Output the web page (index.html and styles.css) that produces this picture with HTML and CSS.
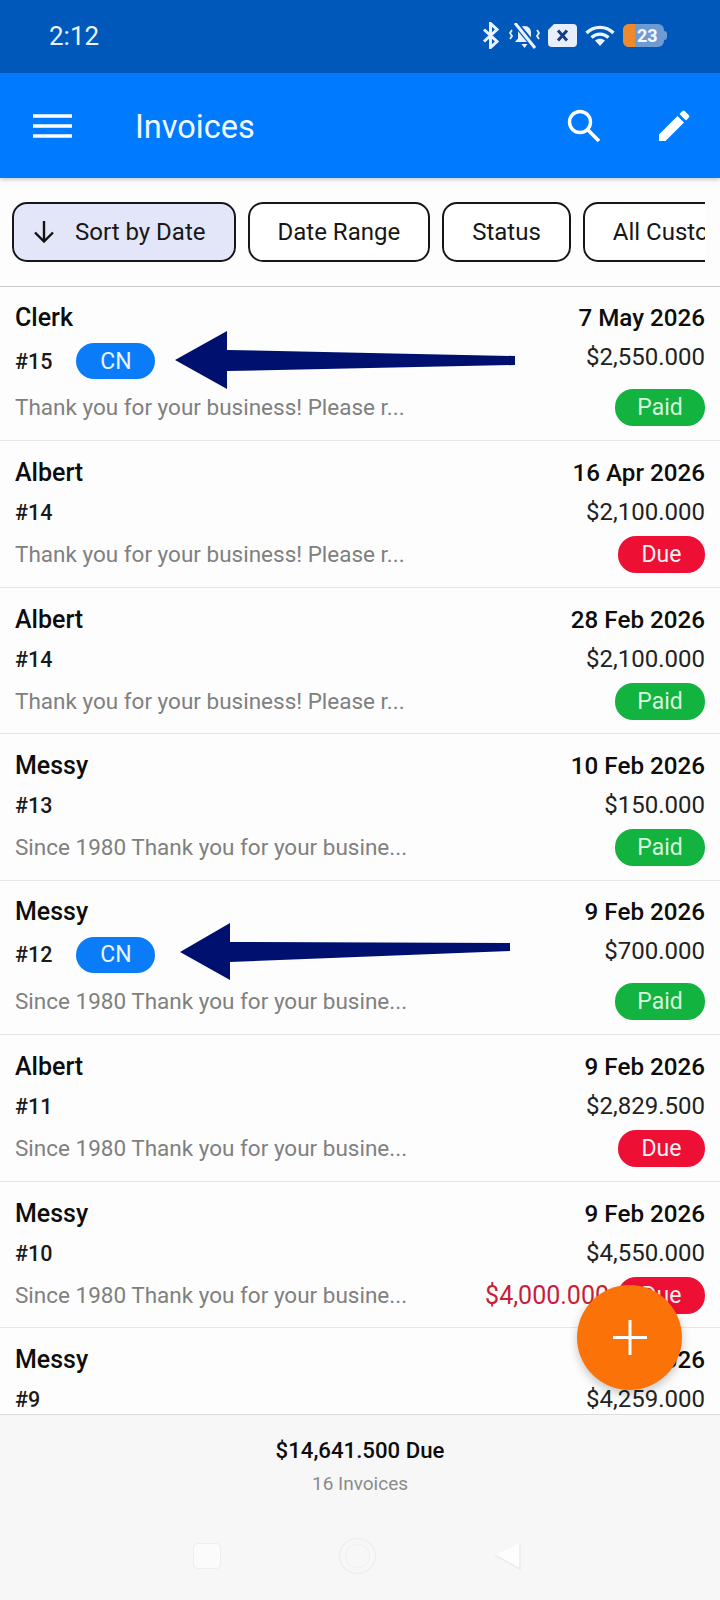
FILE: index.html
```html
<!DOCTYPE html>
<html lang="en">
<head>
<meta charset="utf-8">
<title>Invoices</title>
<link rel="stylesheet" href="styles.css">
</head>
<body>
<div class="app">
  <div class="statusbar">
    <span class="time">2:12</span>
    <div class="status-icons">
      <svg class="ic-bt" viewBox="0 0 18 27"><path d="M2 7.500 15 19.500 8.500 25.500V1.500L15 7.500 2 19.500" fill="none" stroke="#eaf2ff" stroke-width="3"/></svg>
      <svg class="ic-bell" viewBox="0 0 31 26"><path d="M15.500 3c-4.500 0-6.500 3-6.500 6.500v6l-3 3.500h19l-3-3.500v-6c0-3.500-2-6.500-6.500-6.500zM12.500 21h6l-3 4z" fill="#eaf2ff"/><path d="M7 1 26 24" stroke="#0058bb" stroke-width="6"/><path d="M6 0 26 25" stroke="#eaf2ff" stroke-width="3"/><path d="M3 7 1 10l2 3-2 3M28 7l2 3-2 3 2 3" fill="none" stroke="#eaf2ff" stroke-width="1.800"/></svg>
      <svg class="ic-x" viewBox="0 0 29 23"><path d="M6 0H25a4 4 0 0 1 4 4V19a4 4 0 0 1-4 4H4a4 4 0 0 1-4-4V6z" fill="#e8eefc"/><path d="M10 6.500l9 10M19 6.500l-9 10" stroke="#123f86" stroke-width="3"/></svg>
      <svg class="ic-wifi" viewBox="0 0 30 21"><path d="M1.500 8C9 .5 21 .5 28.500 8M6.500 12.500c5-4.500 12-4.500 17 0" fill="none" stroke="#eaf2ff" stroke-width="3.400"/><path d="M10 15.500c3-2.500 7-2.500 10 0l-5 5.500z" fill="#eaf2ff"/></svg>
      <div class="battery"><span class="battery-fill"></span><span class="battery-num">23</span><span class="battery-cap"></span></div>
    </div>
  </div>

  <header class="appbar">
    <svg class="ic-menu" viewBox="0 0 39 24"><path d="M0 2H39M0 12H39M0 22H39" stroke="#fff" stroke-width="3.600"/></svg>
    <h1 class="title">Invoices</h1>
    <svg class="ic-search" viewBox="0 0 33 33"><circle cx="13" cy="13" r="10.500" fill="none" stroke="#fff" stroke-width="3.400"/><path d="M20.500 20.500 32 32" stroke="#fff" stroke-width="3.600"/></svg>
    <svg class="ic-edit" viewBox="0 0 31 31"><path d="M0 31V24.500L18.500 6 25 12.500 6.500 31zM20.500 4l2.700-2.700a2 2 0 0 1 2.800 0l3.700 3.700a2 2 0 0 1 0 2.800L27 10.500z" fill="#fff"/></svg>
  </header>

  <nav class="filters">
    <div class="chip chip-active">
      <svg class="ic-down" viewBox="0 0 22 22"><path d="M11 0V20M2 11.500 11 20.500 20 11.500" fill="none" stroke="#111" stroke-width="2.400"/></svg>
      Sort by Date
    </div>
    <div class="chip">Date Range</div>
    <div class="chip">Status</div>
    <div class="chip">All Customers</div>
  </nav>

  <main class="list">
    <article class="row row-cn">
      <div class="col">
        <div class="name">Clerk</div>
        <div class="num-line"><span class="num">#15</span><span class="cn">CN</span></div>
        <div class="desc">Thank you for your business! Please r...</div>
      </div>
      <div class="col col-right">
        <div class="date">7 May 2026</div>
        <div class="amount">$2,550.000</div>
        <div class="state"><span class="pill paid">Paid</span></div>
      </div>
      <svg class="arrow arrow-one" viewBox="0 0 340 58"><path d="M0 29 52 0V19L340 25V34L52 40V58z" fill="#00106e"/></svg>
    </article>

    <article class="row">
      <div class="col">
        <div class="name">Albert</div>
        <div class="num-line"><span class="num">#14</span></div>
        <div class="desc">Thank you for your business! Please r...</div>
      </div>
      <div class="col col-right">
        <div class="date">16 Apr 2026</div>
        <div class="amount">$2,100.000</div>
        <div class="state"><span class="pill due">Due</span></div>
      </div>
    </article>

    <article class="row">
      <div class="col">
        <div class="name">Albert</div>
        <div class="num-line"><span class="num">#14</span></div>
        <div class="desc">Thank you for your business! Please r...</div>
      </div>
      <div class="col col-right">
        <div class="date">28 Feb 2026</div>
        <div class="amount">$2,100.000</div>
        <div class="state"><span class="pill paid">Paid</span></div>
      </div>
    </article>

    <article class="row">
      <div class="col">
        <div class="name">Messy</div>
        <div class="num-line"><span class="num">#13</span></div>
        <div class="desc">Since 1980 Thank you for your busine...</div>
      </div>
      <div class="col col-right">
        <div class="date">10 Feb 2026</div>
        <div class="amount">$150.000</div>
        <div class="state"><span class="pill paid">Paid</span></div>
      </div>
    </article>

    <article class="row row-cn">
      <div class="col">
        <div class="name">Messy</div>
        <div class="num-line"><span class="num">#12</span><span class="cn">CN</span></div>
        <div class="desc">Since 1980 Thank you for your busine...</div>
      </div>
      <div class="col col-right">
        <div class="date">9 Feb 2026</div>
        <div class="amount">$700.000</div>
        <div class="state"><span class="pill paid">Paid</span></div>
      </div>
      <svg class="arrow arrow-two" viewBox="0 0 330 57"><path d="M0 29 50 0V19L330 20V28L50 39V57z" fill="#00106e"/></svg>
    </article>

    <article class="row">
      <div class="col">
        <div class="name">Albert</div>
        <div class="num-line"><span class="num">#11</span></div>
        <div class="desc">Since 1980 Thank you for your busine...</div>
      </div>
      <div class="col col-right">
        <div class="date">9 Feb 2026</div>
        <div class="amount">$2,829.500</div>
        <div class="state"><span class="pill due">Due</span></div>
      </div>
    </article>

    <article class="row">
      <div class="col">
        <div class="name">Messy</div>
        <div class="num-line"><span class="num">#10</span></div>
        <div class="desc">Since 1980 Thank you for your busine...</div>
      </div>
      <div class="col col-right">
        <div class="date">9 Feb 2026</div>
        <div class="amount">$4,550.000</div>
        <div class="state"><span class="balance">$4,000.000</span><span class="pill due">Due</span></div>
      </div>
    </article>

    <article class="row">
      <div class="col">
        <div class="name">Messy</div>
        <div class="num-line"><span class="num">#9</span></div>
      </div>
      <div class="col col-right">
        <div class="date">9 Feb 2026</div>
        <div class="amount">$4,259.000</div>
      </div>
    </article>
  </main>

  <button class="fab" type="button" aria-label="Add">
    <svg class="ic-plus" viewBox="0 0 34 35"><path d="M17 0V35M0 17.500H34" stroke="#fff" stroke-width="3"/></svg>
  </button>

  <footer class="footer">
    <div class="total">$14,641.500 Due</div>
    <div class="count">16 Invoices</div>
    <div class="navbar">
      <span class="nav-square"></span>
      <span class="nav-circle"><span class="nav-circle-inner"></span></span>
      <svg class="nav-back" viewBox="0 0 28 28"><path d="M1 13 26 27V1z" fill="#fdfdfd"/><path d="M1 13 26 27V1" fill="none" stroke="#ebebeb" stroke-width="1.500"/></svg>
    </div>
  </footer>
</div>
</body>
</html>
```

FILE: styles.css
```css
* { box-sizing: border-box; }
html, body { margin: 0; padding: 0; }
body {
  width: 720px;
  height: 1600px;
  font-family: Roboto, "Noto Sans", sans-serif;
  color: #111;
  background: #fdfdfd;
  overflow: hidden;
}
.app {
  position: relative;
  display: flex;
  flex-direction: column;
  width: 720px;
  height: 1600px;
}

/* status bar */
.statusbar {
  flex: none;
  height: 73px;
  display: flex;
  align-items: center;
  justify-content: space-between;
  padding: 0 56px 2px 49px;
  background: #0058bb;
}
.time { font-size: 26px; color: #eaf2ff; }
.status-icons { display: flex; align-items: center; }
.ic-bt { width: 18px; height: 27px; margin-right: 9px; }
.ic-bell { width: 31px; height: 26px; margin-right: 8px; }
.ic-x { width: 29px; height: 23px; margin-right: 8px; }
.ic-wifi { width: 30px; height: 21px; margin-right: 8px; }
.battery {
  position: relative;
  width: 41px;
  height: 23px;
  display: flex;
  align-items: center;
  background: #6f9bd3;
  border-radius: 6px;
}
.battery-fill { width: 12px; height: 23px; background: #ec8a2d; border-radius: 6px 0 0 6px; }
.battery-num { margin-left: 2px; font-size: 18px; font-weight: 700; color: #f4f7ff; }
.battery-cap {
  position: absolute;
  right: -3px;
  top: 7px;
  width: 3px;
  height: 9px;
  background: #6f9bd3;
  border-radius: 0 3px 3px 0;
}

/* app bar */
.appbar {
  flex: none;
  position: relative;
  z-index: 1;
  height: 105px;
  display: flex;
  align-items: center;
  padding: 0 30px 0 33px;
  background: #007aff;
  box-shadow: 0 2px 4px rgba(0, 0, 0, .2);
}
.ic-menu { width: 39px; height: 24px; margin-right: 63px; }
.title { flex: 1; margin: 0; padding-top: 3px; font-size: 32.500px; font-weight: 400; color: #f2f8ff; }
.ic-search { width: 33px; height: 33px; margin-right: 59px; }
.ic-edit { width: 31px; height: 31px; }

/* filter chips */
.filters {
  flex: none;
  height: 108px;
  display: flex;
  align-items: flex-start;
  gap: 12px;
  margin-right: 15px;
  padding: 24px 0 0 12px;
  overflow: hidden;
}
.chip {
  flex: none;
  height: 60px;
  display: flex;
  align-items: center;
  gap: 20px;
  padding: 0 28px;
  border: 2px solid #161616;
  border-radius: 15px;
  background: #fff;
  font-size: 24px;
  font-weight: 400;
  color: #171717;
}
.chip-active { padding: 0 28px 0 19px; background: #e3e6f8; }
.ic-down { width: 22px; height: 22px; }

/* invoice list */
.list {
  flex: 1;
  min-height: 0;
  overflow: hidden;
  border-top: 1px solid #c9c9c9;
}
.row {
  position: relative;
  display: flex;
  justify-content: space-between;
  padding: 15px 15px 13.670px 15px;
  border-bottom: 1px solid #e6e6e6;
}
.row-cn { padding-top: 14px; padding-bottom: 14px; }
.col { display: flex; flex-direction: column; }
.col-right { align-items: flex-end; }
.name, .date {
  height: 34px;
  line-height: 34px;
  font-size: 25px;
  font-weight: 500;
  color: #0d0d0d;
}
.date { font-size: 24.200px; }
.num-line {
  height: 45px;
  margin-bottom: 1px;
  display: flex;
  align-items: center;
}
.num { font-size: 21.500px; font-weight: 500; color: #1a1a1a; }
.row-cn .num-line { height: 52px; margin-bottom: 2px; }
.cn {
  width: 79px;
  height: 36px;
  margin-left: 24px;
  display: flex;
  align-items: center;
  justify-content: center;
  border-radius: 18px;
  background: #0a7cf7;
  color: #e9f3ff;
  font-size: 23px;
}
.desc {
  height: 37px;
  line-height: 37px;
  font-size: 22.500px;
  color: #808080;
  white-space: nowrap;
}
.amount {
  height: 46px;
  line-height: 44px;
  font-size: 24px;
  color: #222;
}
.row-cn .amount { margin-bottom: 8px; }
.state { height: 37px; display: flex; align-items: center; gap: 9px; }
.pill {
  height: 37px;
  display: flex;
  align-items: center;
  justify-content: center;
  border-radius: 18px;
  color: #f2f2f2;
  font-size: 23px;
}
.paid { width: 90px; background: #12b33f; color: #d9f5df; }
.due { width: 87px; background: #ee0f35; }
.balance { font-size: 25px; color: #c81e37; }

/* arrows drawn over the rows */
.arrow { position: absolute; }
.arrow-one { left: 175px; top: 44px; width: 340px; height: 58px; }
.arrow-two { left: 180px; top: 42px; width: 330px; height: 57px; }

/* floating action button */
.fab {
  position: absolute;
  z-index: 2;
  left: 577px;
  top: 1285px;
  width: 105px;
  height: 105px;
  padding: 0;
  display: flex;
  align-items: center;
  justify-content: center;
  border: 0;
  border-radius: 50%;
  background: #fb7308;
  box-shadow: 0 4px 10px rgba(0, 0, 0, .22);
}
.ic-plus { width: 34px; height: 35px; }

/* footer */
.footer {
  flex: none;
  position: relative;
  z-index: 1;
  height: 186px;
  display: flex;
  flex-direction: column;
  align-items: center;
  padding-top: 19px;
  border-top: 1px solid #dcdcdc;
  background: #f7f7f7;
}
.total { height: 32px; line-height: 32px; font-size: 22.200px; font-weight: 500; color: #0d0d0d; }
.count { height: 35px; line-height: 35px; font-size: 19px; color: #8b8b8b; }
.navbar {
  display: flex;
  align-items: center;
  margin: 37px 6px 0 0;
}
.nav-square {
  width: 28px;
  height: 26px;
  margin-right: 118px;
  border: 1.500px solid #eeeeee;
  border-radius: 5px;
  background: #fbfbfb;
}
.nav-circle {
  width: 37px;
  height: 36px;
  margin-right: 118px;
  display: flex;
  align-items: center;
  justify-content: center;
  border: 1.500px solid #ebebeb;
  border-radius: 50%;
}
.nav-circle-inner { width: 25px; height: 24px; border: 1.500px solid #efefef; border-radius: 50%; }
.nav-back { width: 28px; height: 28px; }
```
